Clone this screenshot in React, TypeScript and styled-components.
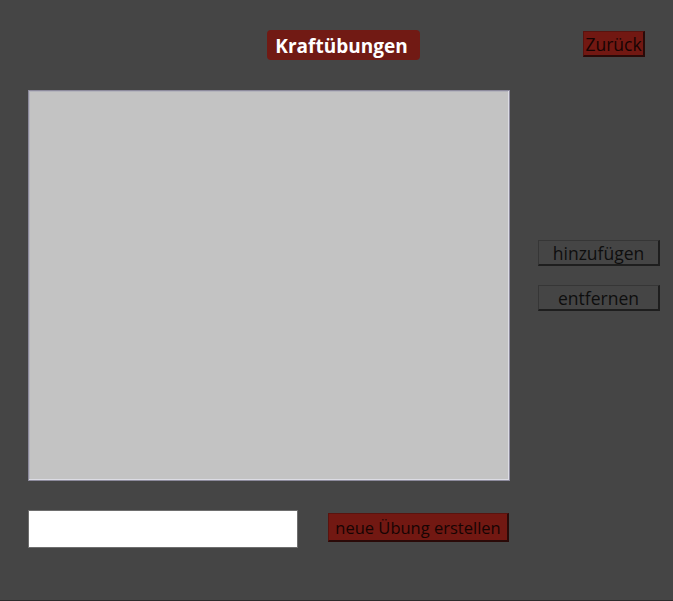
import React from "react";
import styled, { createGlobalStyle } from "styled-components";

const Global = createGlobalStyle`
  html, body { margin: 0; padding: 0; background: #454545; }
  body { font-family: "Open Sans", "Noto Sans", "DejaVu Sans", sans-serif; }
  * { box-sizing: border-box; }
`;

const Page = styled.div`
  height: 601px;
  background: #454545;
  border-bottom: 1px solid #2c2c2c;
  padding: 30px 13px 0 28px;
  display: flex;
  flex-direction: column;
`;

const Header = styled.div`
  display: grid;
  grid-template-columns: 1fr auto 1fr;
  align-items: start;
  padding-left: 14px;
  padding-right: 15px;
`;

const Title = styled.div`
  grid-column: 2;
  height: 30px;
  padding: 2px 12px 0 8px;
  background: #711a14;
  border-radius: 4px;
  color: #ffffff;
  font-weight: 700;
  font-size: 19px;
  line-height: 28px;
  white-space: nowrap;
`;

const RedButton = styled.button<{ $w: number; $h: number; $fs?: number }>`
  width: ${(p) => p.$w}px;
  height: ${(p) => p.$h}px;
  padding: 2px 0 0 0;
  flex-shrink: 0;
  background: #721812;
  border: 1px solid #5a130e;
  border-right: 2px solid #2a0a08;
  border-bottom: 2px solid #2a0a08;
  color: #170403;
  font-family: inherit;
  font-size: ${(p) => p.$fs ?? 17.5}px;
  line-height: 1;
  white-space: nowrap;
`;

const BackButton = styled(RedButton)`
  grid-column: 3;
  justify-self: end;
  margin-top: 1px;
`;

const Main = styled.div`
  display: flex;
  gap: 28px;
  margin-top: 30px;
`;

const ListBox = styled.div`
  flex-shrink: 0;
  width: 482px;
  height: 391px;
  background: #c3c3c3;
  border: 1px solid #8c8a9c;
  box-shadow: inset -1px -1px 0 #dcdce4, inset 1px 1px 0 #b4b4bc;
`;

const Side = styled.div`
  display: flex;
  flex-direction: column;
  gap: 19px;
  padding-top: 150px;
`;

const GrayButton = styled.button`
  width: 122px;
  height: 26px;
  padding: 2px 0 0 0;
  background: #454545;
  border: 1px solid #363636;
  border-right: 2px solid #1e1e1e;
  border-bottom: 2px solid #1e1e1e;
  color: #0e0e0e;
  font-family: inherit;
  font-size: 17.5px;
  line-height: 1;
`;

const Bottom = styled.div`
  display: flex;
  align-items: flex-start;
  gap: 30px;
  margin-top: 29px;
`;

const Input = styled.input`
  width: 270px;
  height: 38px;
  background: #ffffff;
  border: 1px solid #6e6e6e;
  outline: none;
  font-family: inherit;
  font-size: 16px;
`;

const CreateButton = styled(RedButton)`
  margin-top: 3px;
`;

export default function App() {
  return (
    <>
      <Global />
      <Page>
        <Header>
          <Title>Kraftübungen</Title>
          <BackButton $w={62} $h={26}>Zurück</BackButton>
        </Header>
        <Main>
          <ListBox />
          <Side>
            <GrayButton>hinzufügen</GrayButton>
            <GrayButton>entfernen</GrayButton>
          </Side>
        </Main>
        <Bottom>
          <Input />
          <CreateButton $w={181} $h={29} $fs={16.5}>neue Übung erstellen</CreateButton>
        </Bottom>
      </Page>
    </>
  );
}
